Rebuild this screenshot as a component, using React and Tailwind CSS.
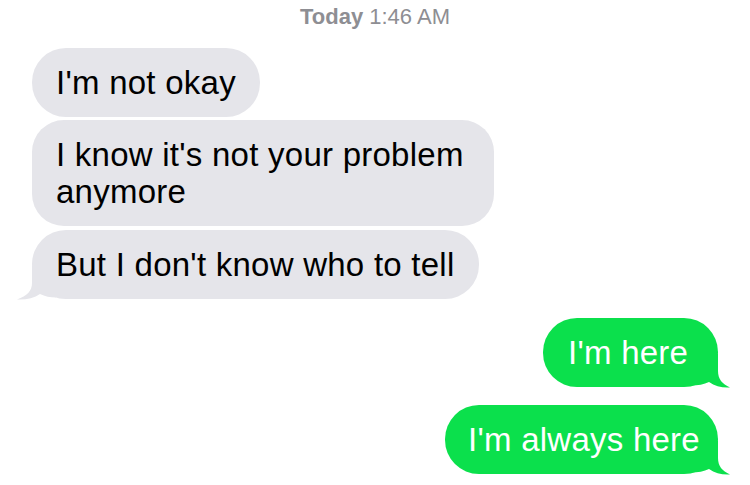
import React from "react";

function TailLeft({ color }) {
  return (
    <svg
      className="absolute left-[-16px] bottom-[-1px]"
      width="40"
      height="34"
      viewBox="0 0 40 34"
    >
      <path
        d="M16 0 L16 17 C16 25 11 30 1 33.5 C10 34 18 32 24 28 C29 30.5 34 31.5 40 31.5 L40 0 Z"
        fill={color}
      />
    </svg>
  );
}

function TailRight({ color }) {
  return (
    <svg
      className="absolute right-[-13px] bottom-[-1px] -scale-x-100"
      width="40"
      height="34"
      viewBox="0 0 40 34"
    >
      <path
        d="M13 0 L13 17 C13 25 9 30 1 33.5 C9 34 16 32 22 28 C27 30.5 33 31.5 40 31.5 L40 0 Z"
        fill={color}
      />
    </svg>
  );
}

export default function App() {
  return (
    <div
      className="w-[750px] h-[485px] bg-white overflow-hidden relative"
      style={{ fontFamily: '"Liberation Sans", Arial, sans-serif' }}
    >
      <div className="pt-[5px] text-center text-[22px] leading-[24px] text-[#8e8e93]">
        <span className="font-bold">Today</span> 1:46 AM
      </div>

      <div className="mt-[19px] pl-[32px] flex flex-col items-start text-[33px] leading-[37px] tracking-[0.25px] text-black">
        <div className="w-[228px] whitespace-nowrap bg-[#e5e5ea] rounded-[34px] pl-[24px] py-[16px]">
          I'm not okay
        </div>
        <div className="mt-[3px] w-[462px] bg-[#e5e5ea] rounded-[32px] pl-[24px] pr-[16px] py-[16px]">
          I know it's not your problem anymore
        </div>
        <div className="relative mt-[4px] w-[447px] whitespace-nowrap bg-[#e5e5ea] rounded-[34px] pl-[24px] py-[16px]">
          <TailLeft color="#e5e5ea" />
          <span className="relative">But I don't know who to tell</span>
        </div>
      </div>

      <div className="mt-[19px] pr-[32px] flex flex-col items-end text-[33px] leading-[37px] tracking-[0.25px] text-white">
        <div className="relative w-[175px] whitespace-nowrap bg-[#0be04c] rounded-[34px] pl-[25px] py-[16px]">
          <TailRight color="#0be04c" />
          <span className="relative">I'm here</span>
        </div>
        <div className="relative mt-[18px] w-[273px] whitespace-nowrap bg-[#0be04c] rounded-[34px] pl-[23px] py-[16px]">
          <TailRight color="#0be04c" />
          <span className="relative">I'm always here</span>
        </div>
      </div>
    </div>
  );
}
